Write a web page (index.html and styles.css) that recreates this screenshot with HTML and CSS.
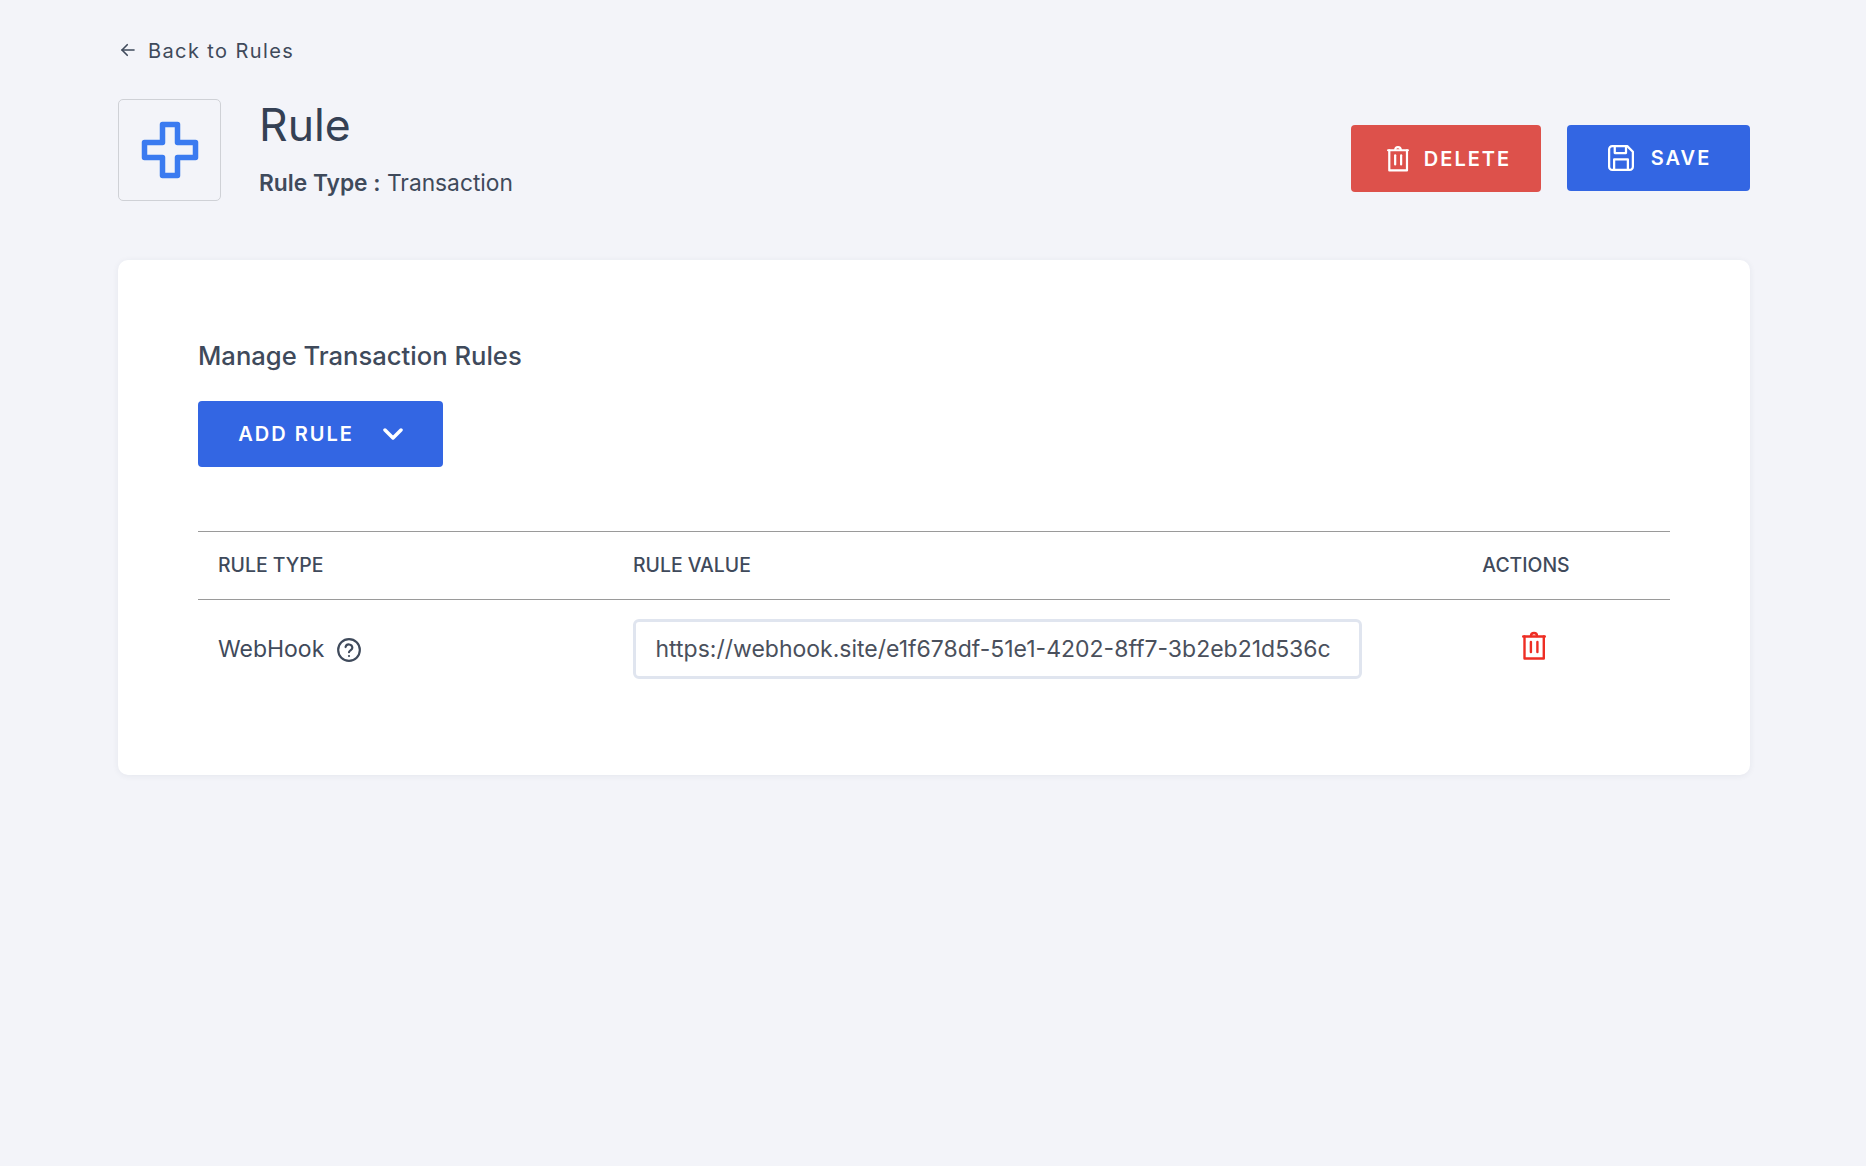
FILE: index.html
```html
<!DOCTYPE html>
<html lang="en">
<head>
  <meta charset="UTF-8">
  <title>Rule</title>
  <link rel="stylesheet" href="styles.css">
</head>
<body>

  <div class="page">
    <a class="back-link" href="#">
      <svg width="18" height="18" viewBox="0 0 24 24" fill="none" stroke="#3f4a5b" stroke-width="2.200" stroke-linecap="round" stroke-linejoin="round"><path d="M20 12H4"/><path d="M11 5l-7 7 7 7"/></svg>
      <span>Back to Rules</span>
    </a>

    <!-- Header -->
    <div class="header">
      <div class="header-left">
        <div class="icon-box">
          <svg width="60" height="60" viewBox="0 0 60 60" fill="none" stroke="#3b7bf0" stroke-width="5.500" stroke-linejoin="round"><path d="M22.500 4.500h15v18h18v15h-18v18h-15v-18h-18v-15h18z"/></svg>
        </div>
        <div class="title-block">
          <h1>Rule</h1>
          <p class="subtitle"><b>Rule Type :</b> Transaction</p>
        </div>
      </div>
      <div class="header-actions">
        <button type="button" class="btn btn-delete">
          <svg width="22" height="27" viewBox="0 0 24 29" fill="none" stroke="#fff" stroke-width="2.400" stroke-linecap="round" stroke-linejoin="round"><path d="M1.200 5.500h21.600"/><path d="M9 5c0-4 6-4 6 0"/><path d="M2.500 5.500v22h19.300v-22"/><path d="M8.900 11v10"/><path d="M15.400 11v10"/></svg>
          DELETE
        </button>
        <button type="button" class="btn btn-save">
          <svg width="30" height="30" viewBox="0 0 24 24" fill="none" stroke="#fff" stroke-width="1.800" stroke-linecap="round" stroke-linejoin="round"><path d="M5 2.500h12l4.500 4.500v12a2.500 2.500 0 0 1-2.500 2.500H5A2.500 2.500 0 0 1 2.500 19V5A2.500 2.500 0 0 1 5 2.500z"/><path d="M7 2.500v5.500h9V2.500"/><path d="M6.500 21.500v-8.500h11v8.500"/></svg>
          SAVE
        </button>
      </div>
    </div>

    <!-- Rules card -->
    <div class="card">
      <h2>Manage Transaction Rules</h2>
      <button type="button" class="btn btn-add">
        ADD RULE
        <svg width="20" height="12" viewBox="0 0 20 12" fill="none" stroke="#fff" stroke-width="3.500" stroke-linecap="round" stroke-linejoin="round"><path d="M2 2l8 8 8-8"/></svg>
      </button>

      <table class="rules-table">
        <thead>
          <tr>
            <th class="col-type">RULE TYPE</th>
            <th class="col-value">RULE VALUE</th>
            <th class="col-actions">ACTIONS</th>
          </tr>
        </thead>
        <tbody>
          <tr>
            <td>
              <div class="rule-name">
                WebHook
                <svg width="26" height="26" viewBox="0 0 24 24" fill="none" stroke="#3f4a5b" stroke-width="2" stroke-linecap="round" stroke-linejoin="round"><circle cx="12" cy="12" r="10"/><path d="M8.800 9.300a3.200 3.200 0 0 1 6.300.7c0 2-3.100 2.500-3.100 4"/><path d="M12 17.500h.01"/></svg>
              </div>
            </td>
            <td><input class="rule-input" type="text" value="https://webhook.site/e1f678df-51e1-4202-8ff7-3b2eb21d536c"></td>
            <td class="cell-actions">
              <svg width="24" height="29" viewBox="0 0 24 29" fill="none" stroke="#ee2e24" stroke-width="2.400" stroke-linecap="round" stroke-linejoin="round"><path d="M1.200 5.500h21.600"/><path d="M9 5c0-4 6-4 6 0"/><path d="M2.500 5.500v22h19.300v-22"/><path d="M8.900 11v10"/><path d="M15.400 11v10"/></svg>
            </td>
          </tr>
        </tbody>
      </table>
    </div>
  </div>

</body>
</html>
```

FILE: styles.css
```css
* {
  box-sizing: border-box;
}

body {
  margin: 0;
  min-height: 1166px;
  background-color: #f3f4f9;
  color: #3f4a5b;
  font-family: Inter, "Noto Sans", sans-serif;
}

.page {
  padding: 38px 116px 0 118px;
}

.back-link {
  display: flex;
  align-items: center;
  gap: 11px;
  height: 26px;
  padding-left: 1px;
  color: #3f4a5b;
  font-size: 20px;
  letter-spacing: 1.4px;
  text-decoration: none;
}

.back-link svg {
  margin-top: -2px;
}

/* Header */
.header {
  display: flex;
  justify-content: space-between;
  margin-top: 35px;
}

.header-left {
  display: flex;
  gap: 38px;
}

.icon-box {
  display: flex;
  align-items: center;
  justify-content: center;
  width: 103px;
  height: 102px;
  border: 1px solid #cfd1d6;
  border-radius: 5px;
}

h1 {
  margin: 0;
  color: #344054;
  font-size: 44.5px;
  font-weight: 400;
  line-height: 53px;
}

.subtitle {
  margin: 17px 0 0;
  font-size: 22.75px;
  line-height: 27px;
}

.subtitle b {
  font-weight: 600;
}

.header-actions {
  display: flex;
  gap: 26px;
  padding-top: 26px;
}

.btn {
  display: flex;
  align-items: center;
  justify-content: center;
  border: none;
  border-radius: 4px;
  color: #fff;
  font-family: inherit;
  font-size: 20px;
  font-weight: 600;
  letter-spacing: 2px;
  cursor: pointer;
}

.btn-delete {
  gap: 15px;
  width: 190px;
  height: 67px;
  padding: 0 0 0 6px;
  background-color: #dd514b;
}

.btn-save {
  gap: 15px;
  width: 183px;
  height: 66px;
  background-color: #3366e3;
}

/* Card */
.card {
  margin-top: 59px;
  height: 515px;
  padding: 80px 80px 0;
  background-color: #fff;
  border-radius: 10px;
  box-shadow: 0 1px 6px rgba(40, 50, 90, 0.07);
}

h2 {
  margin: 0;
  color: #3f4a5b;
  font-size: 25.6px;
  font-weight: 500;
  line-height: 32px;
}

.btn-add {
  gap: 29px;
  width: 245px;
  height: 66px;
  margin-top: 29px;
  background-color: #3366e3;
}

/* Table */
.rules-table {
  width: 100%;
  margin-top: 64px;
  border-collapse: collapse;
  table-layout: fixed;
}

.rules-table th {
  height: 68px;
  padding: 0 20px 1px;
  border-top: 1px solid #9a9a9a;
  border-bottom: 1px solid #9a9a9a;
  font-size: 19.4px;
  font-weight: 500;
  text-align: left;
}

.rules-table td {
  padding: 19px 20px 0;
  font-size: 23px;
  vertical-align: top;
}

.col-type {
  width: 415px;
}

.col-actions {
  width: 288px;
}

.rules-table .col-actions {
  text-align: center;
}

.rule-name {
  display: flex;
  align-items: center;
  gap: 12px;
  height: 60px;
}

.rule-name svg {
  margin-top: 2px;
}

.rule-input {
  display: block;
  width: 100%;
  height: 60px;
  padding: 0 19.500px;
  border: 3px solid #e0e5ef;
  border-radius: 6px;
  color: #4a505c;
  font-family: inherit;
  font-size: 23px;
}

.rules-table .cell-actions {
  padding-top: 31px;
  padding-left: 36px;
}

.cell-actions svg {
  display: block;
  margin: 0 auto;
}
```
